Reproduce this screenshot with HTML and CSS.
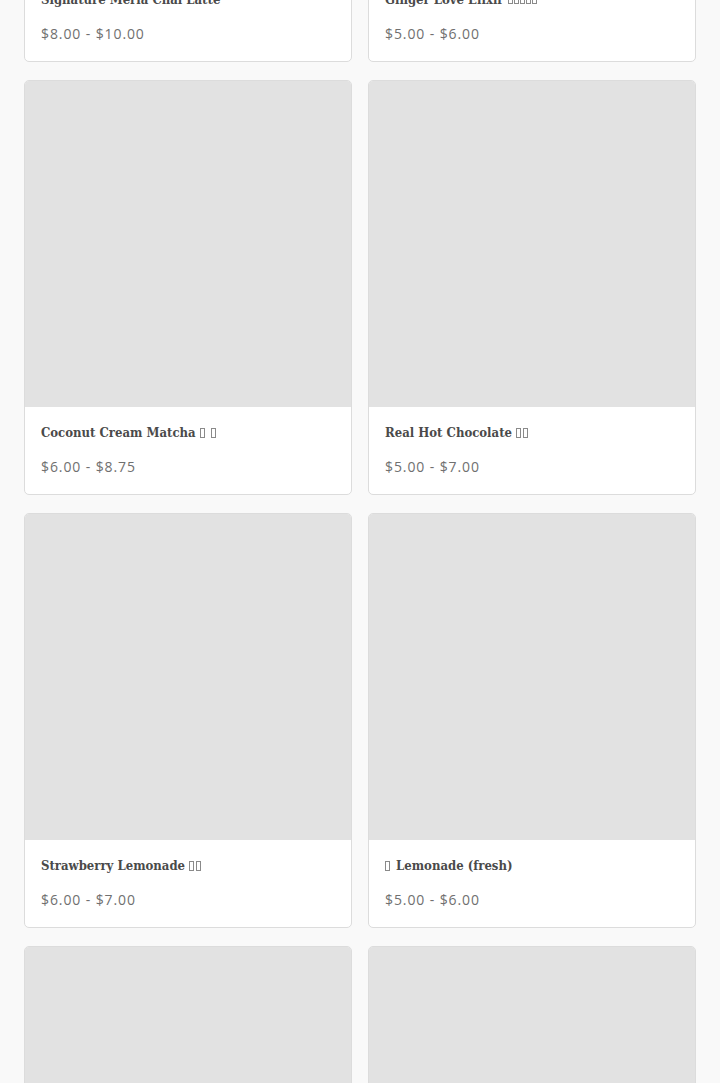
FILE: index.html
```html
<!DOCTYPE html>
<html lang="en">
<head>
    <meta charset="UTF-8">
    <meta name="viewport" content="width=device-width, initial-scale=1.0">
    <title>Menu - Drinks</title>
    <link rel="stylesheet" href="styles.css">
</head>
<body>
    <div class="product-grid">
        <div class="product-card">
            <div class="product-image"></div>
            <div class="product-info">
                <div class="product-name">Signature Merla Chai Latte</div>
                <div class="product-price">$8.00 - $10.00</div>
            </div>
        </div>
        <div class="product-card">
            <div class="product-image"></div>
            <div class="product-info">
                <div class="product-name">Ginger Love Elixir <span class="tofu sm"></span><span class="tofu sm"></span><span class="tofu sm"></span><span class="tofu sm"></span><span class="tofu sm"></span></div>
                <div class="product-price">$5.00 - $6.00</div>
            </div>
        </div>

        <div class="product-card">
            <div class="product-image"></div>
            <div class="product-info">
                <div class="product-name">Coconut Cream Matcha <span class="tofu"></span> <span class="tofu"></span></div>
                <div class="product-price">$6.00 - $8.75</div>
            </div>
        </div>
        <div class="product-card">
            <div class="product-image"></div>
            <div class="product-info">
                <div class="product-name">Real Hot Chocolate <span class="tofu"></span><span class="tofu"></span></div>
                <div class="product-price">$5.00 - $7.00</div>
            </div>
        </div>

        <div class="product-card">
            <div class="product-image"></div>
            <div class="product-info">
                <div class="product-name">Strawberry Lemonade <span class="tofu"></span><span class="tofu"></span></div>
                <div class="product-price">$6.00 - $7.00</div>
            </div>
        </div>
        <div class="product-card">
            <div class="product-image"></div>
            <div class="product-info">
                <div class="product-name"><span class="tofu"></span> Lemonade (fresh)</div>
                <div class="product-price">$5.00 - $6.00</div>
            </div>
        </div>

        <div class="product-card">
            <div class="product-image"></div>
        </div>
        <div class="product-card">
            <div class="product-image"></div>
        </div>
    </div>
</body>
</html>
```

FILE: styles.css
```css
body {
    margin: 0;
    background: #f9f9f9;
    font-family: 'Open Sans', sans-serif;
    overflow: hidden;
}

/* page is shown scrolled into the list */
.product-grid {
    display: grid;
    grid-template-columns: 1fr 1fr;
    gap: 18px 16px;
    padding: 0 24px;
    margin-top: -353px;
}

.product-card {
    background: #fff;
    border: 1px solid #dcdcdc;
    border-radius: 5px;
    overflow: hidden;
}

.product-image {
    aspect-ratio: 1 / 1;
    background: #e2e2e2;
}

.product-info {
    padding: 16px 16px 17px;
}

.product-name {
    font-family: 'DejaVu Serif Condensed', 'DejaVu Serif', serif;
    font-stretch: condensed;
    font-weight: bold;
    font-size: 13px;
    line-height: 20px;
    color: #4a4a4a;
    white-space: nowrap;
}

/* missing-glyph boxes for the emoji */
.tofu {
    display: inline-block;
    width: 3px;
    height: 8px;
    border: 1px solid #8a8a8a;
    vertical-align: -1px;
    margin-right: 2px;
}

.tofu.sm {
    width: 3px;
    height: 4px;
    margin-right: 1px;
    vertical-align: 0;
}

.product-price {
    margin-top: 14px;
    font-size: 14px;
    line-height: 20px;
    letter-spacing: 0.9px;
    color: #707070;
}
```
